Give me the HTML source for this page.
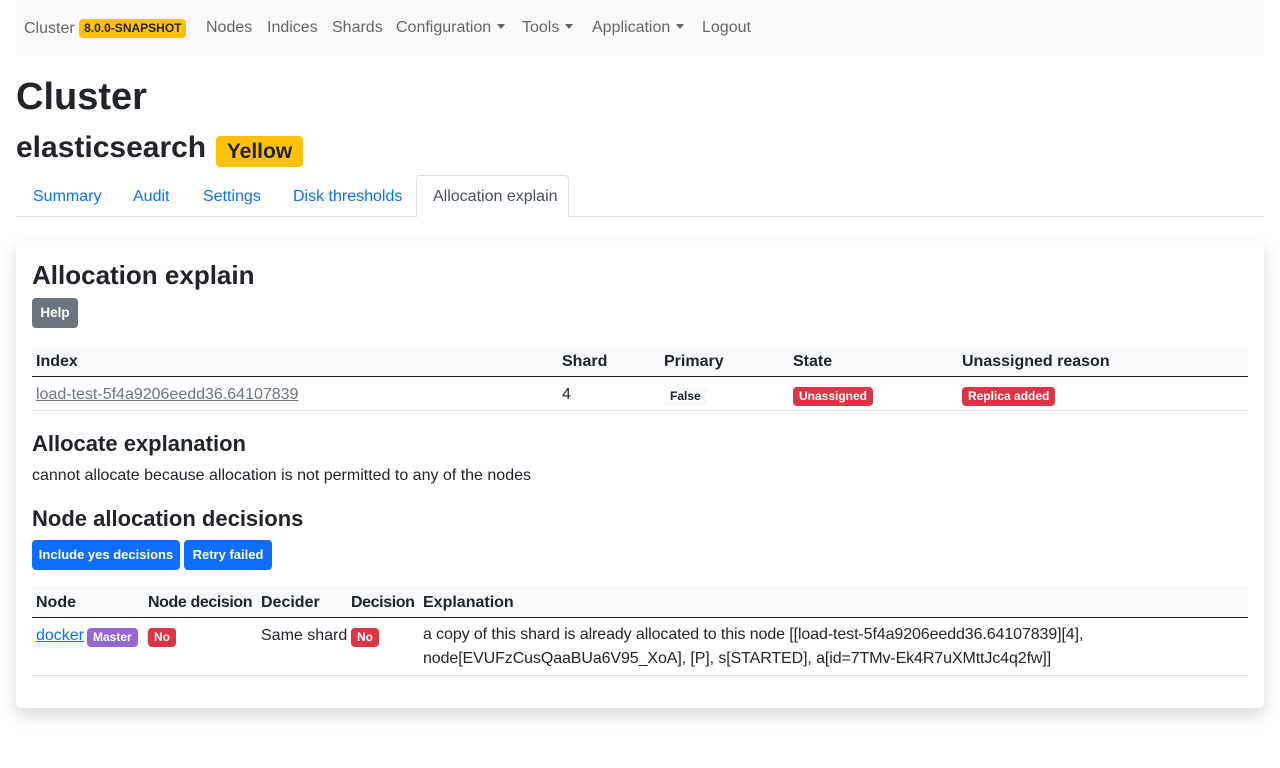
<!DOCTYPE html>
<html><head><style>
*{box-sizing:border-box;margin:0;padding:0}
body{width:1280px;height:768px;background:#fff;font-family:"Liberation Sans",Arial,sans-serif;color:#212529;font-size:16px;position:relative;overflow:hidden}
.a{position:absolute;white-space:nowrap}
.nav{position:absolute;left:16px;top:0;width:1248px;height:56px;background:#f8f9fa}
.nl{color:rgba(0,0,0,.6);font-size:16px;top:19px}
.caret{display:inline-block;width:0;height:0;border-left:4px solid transparent;border-right:4px solid transparent;border-top:5px solid rgba(0,0,0,.6);vertical-align:3px;margin-left:6px}
.badge{display:inline-block;font-weight:bold;font-size:12px;padding:3px 6px;border-radius:4px;line-height:1.05;color:#fff}
.tab{color:#0d6efd;top:188px}
.card{position:absolute;left:16px;top:241px;width:1248px;height:467px;background:#fff;box-shadow:0 .5rem 1rem rgba(0,0,0,.15);border-radius:4px}
.th{position:absolute;left:32px;width:1216px;height:32px;background:#f8f9fa;border-bottom:1px solid #212529}
.hb{font-weight:bold}
.line{position:absolute;left:32px;width:1216px;height:1px;background:#dee2e6}
.btn{position:absolute;color:#fff;font-size:13.5px;border-radius:4px;line-height:30px;height:30px;white-space:nowrap;text-align:center}
</style></head><body>
<div class="nav"></div>
<div class="a nl" style="left:24px">Cluster <span class="badge" style="background:#ffc107;color:#212529;font-size:12px;vertical-align:1px;padding:3px 5px">8.0.0-SNAPSHOT</span></div>
<div class="a nl" style="left:206px">Nodes</div>
<div class="a nl" style="left:267px">Indices</div>
<div class="a nl" style="left:332px">Shards</div>
<div class="a nl" style="left:396px">Configuration<span class="caret"></span></div>
<div class="a nl" style="left:522px">Tools<span class="caret"></span></div>
<div class="a nl" style="left:592px">Application<span class="caret"></span></div>
<div class="a nl" style="left:702px">Logout</div>

<div class="a" style="left:16px;top:76px;font-size:38px;font-weight:bold">Cluster</div>
<div class="a" style="left:16px;top:131px;font-size:30px;font-weight:bold">elasticsearch</div>
<div class="a" style="left:216px;top:136px;width:87px;height:31px;background:#ffc107;border-radius:4px;font-weight:bold;font-size:21px;text-align:center;line-height:32px">Yellow</div>

<div class="a" style="left:16px;top:216px;width:1248px;height:1px;background:#dee2e6"></div>
<div class="a" style="left:416px;top:175px;width:153px;height:42px;border:1px solid #dee2e6;border-bottom:none;background:#fff;border-radius:4px 4px 0 0"></div>
<div class="a tab" style="left:33px">Summary</div>
<div class="a tab" style="left:133px">Audit</div>
<div class="a tab" style="left:203px">Settings</div>
<div class="a tab" style="left:293px">Disk thresholds</div>
<div class="a tab" style="left:433px;color:#495057">Allocation explain</div>

<div class="card"></div>
<div class="a" style="left:32px;top:260px;font-size:26px;font-weight:bold">Allocation explain</div>
<div class="btn" style="left:32px;top:298px;width:46px;background:#6c757d;font-weight:bold">Help</div>

<div class="th" style="top:345px"></div>
<div class="a hb" style="left:36px;top:353px">Index</div>
<div class="a hb" style="left:562px;top:353px">Shard</div>
<div class="a hb" style="left:664px;top:353px">Primary</div>
<div class="a hb" style="left:793px;top:353px">State</div>
<div class="a hb" style="left:962px;top:353px">Unassigned reason</div>
<div class="a" style="left:36px;top:386px;color:#6c757d;text-decoration:underline">load-test-5f4a9206eedd36.64107839</div>
<div class="a" style="left:562px;top:386px">4</div>
<div class="a badge" style="left:664px;top:387px;background:#f8f9fa;color:#212529">False</div>
<div class="a badge" style="left:793px;top:387px;background:#dc3545">Unassigned</div>
<div class="a badge" style="left:962px;top:387px;background:#dc3545">Replica added</div>
<div class="line" style="top:410px"></div>

<div class="a" style="left:32px;top:431px;font-size:22px;font-weight:bold">Allocate explanation</div>
<div class="a" style="left:32px;top:467px">cannot allocate because allocation is not permitted to any of the nodes</div>
<div class="a" style="left:32px;top:506px;font-size:22px;font-weight:bold">Node allocation decisions</div>
<div class="btn" style="left:32px;top:540px;width:148px;background:#0d6efd;font-weight:bold;font-size:13px">Include yes decisions</div>
<div class="btn" style="left:184px;top:540px;width:88px;background:#0d6efd;font-weight:bold;font-size:13px">Retry failed</div>

<div class="th" style="top:586px"></div>
<div class="a hb" style="left:36px;top:594px">Node</div>
<div class="a hb" style="left:148px;top:594px;letter-spacing:-0.4px">Node decision</div>
<div class="a hb" style="left:261px;top:594px">Decider</div>
<div class="a hb" style="left:351px;top:594px;letter-spacing:-0.4px">Decision</div>
<div class="a hb" style="left:423px;top:594px">Explanation</div>
<div class="a" style="left:36px;top:627px;color:#0d6efd;text-decoration:underline">docker</div>
<div class="a badge" style="left:87px;top:628px;background:#9567cf">Master</div>
<div class="a badge" style="left:148px;top:628px;background:#dc3545">No</div>
<div class="a" style="left:261px;top:627px">Same shard</div>
<div class="a badge" style="left:351px;top:628px;background:#dc3545">No</div>
<div class="a" style="left:423px;top:623px;line-height:24px;letter-spacing:-0.1px">a copy of this shard is already allocated to this node [[load-test-5f4a9206eedd36.64107839][4],<br>node[EVUFzCusQaaBUa6V95_XoA], [P], s[STARTED], a[id=7TMv-Ek4R7uXMttJc4q2fw]]</div>
<div class="line" style="top:675px"></div>
</body></html>
